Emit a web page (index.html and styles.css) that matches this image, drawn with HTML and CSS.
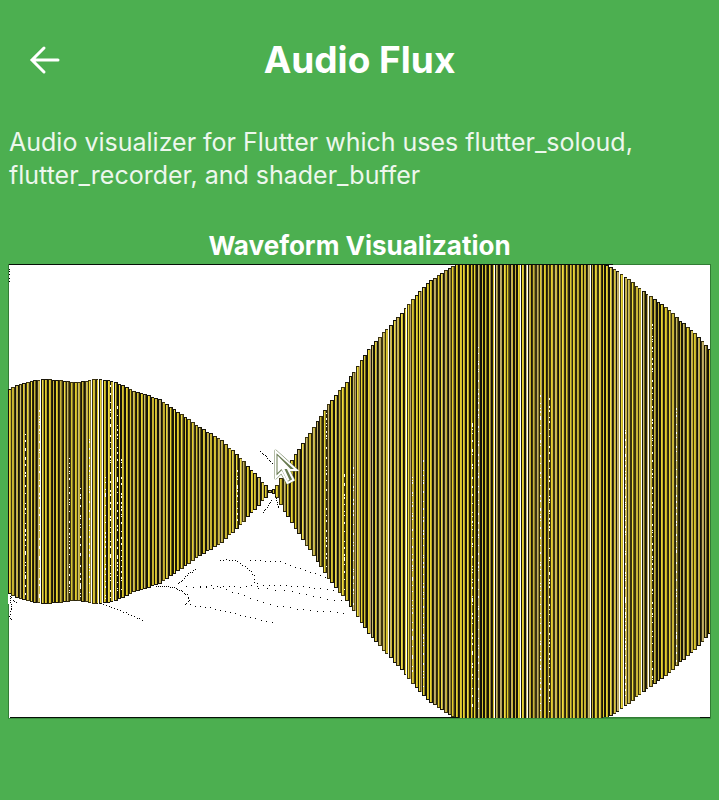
FILE: index.html
```html
<!DOCTYPE html>
<html lang="en">
<head>
<meta charset="utf-8">
<meta name="viewport" content="width=device-width, initial-scale=1">
<title>Audio Flux</title>
<link rel="stylesheet" href="styles.css">
</head>
<body>
<header class="app-bar">
  <button class="back" type="button" aria-label="Back">
    <svg viewBox="0 0 32 32" aria-hidden="true"><path d="M29 16H4M15 4 3 16l12 12"/></svg>
  </button>
  <h1 class="title">Audio Flux</h1>
</header>
<main class="content">
  <p class="description">Audio visualizer for Flutter which uses flutter_soloud, flutter_recorder, and shader_buffer</p>
  <h2 class="section-title">Waveform Visualization</h2>
  <svg class="wave" viewBox="0 0 703 455" role="img" aria-label="Waveform">
    <g id="wave" shape-rendering="crispEdges"></g>
    <g class="pointer">
      <path class="pointer-rim" d="M267.500 187v27l6-6 6 11 6-3-5-10h8z"/>
      <path class="pointer-band" d="M267.500 187v27l6-6 6 11 6-3-5-10h8z"/>
      <path class="pointer-core" d="M269.500 191.500v17.500l4-4 6 12 2-1-5-11h6z"/>
    </g>
  </svg>
</main>
<script>
(function () {
  const WIDTH = 703, CENTER = 227;
  let markup = '';

  function rect(x, y, width, height, fill) {
    markup += `<path fill="${fill}" d="M${x} ${y}h${width}v${height}h${-width}z"/>`;
  }

  let seed = 7;
  function random() {
    seed = (seed * 16807) % 2147483647;
    return seed / 2147483647;
  }

  // Amplitude envelope as [x, half height] pairs.
  const envelope = [
    [0, 101], [12, 107], [22, 110], [37, 112], [52, 111], [67, 109], [77, 110], [89, 112],
    [102, 111], [112, 107], [127, 100], [152, 92], [172, 78], [192, 64], [214, 51],
    [232, 34], [247, 18], [258, 6], [263, 0], [267, 3], [282, 28], [292, 43], [307, 66],
    [322, 88], [342, 113], [362, 143], [377, 160], [392, 176], [412, 200], [422, 210],
    [437, 220], [449, 227], [595, 227], [602, 225], [612, 219], [632, 203], [642, 196],
    [662, 181], [672, 171], [687, 158], [703, 141]
  ];

  function amplitude(x) {
    for (let i = 1; i < envelope.length; i++) {
      const [x1, a1] = envelope[i];
      const [x0, a0] = envelope[i - 1];
      if (x <= x1) return a0 + (a1 - a0) * (x - x0) / (x1 - x0);
    }
    return 141;
  }

  const bright = ['#e8d52f', '#d9c62f', '#e3cd28', '#c9b535', '#c9bb6c', '#c3b066', '#efdd3e'];
  const middle = ['#b9a62b', '#c4b02c', '#8f8130', '#cdb83a', '#b3a35a', '#6b6018'];
  const dark = ['#15130a', '#2b250c', '#3b3310', '#1a1608'];
  const pick = list => list[Math.floor(random() * list.length)];
  const gaps = [31, 81, 90, 93, 102, 377, 398, 486, 509, 518, 581, 608, 615, 631, 640];

  for (let i = 0; i < 192; i++) {
    const x = Math.floor(i * 11 / 3);
    const next = Math.floor((i + 1) * 11 / 3);
    const a = Math.max(1, Math.round(amplitude(x + 2)));
    const top = CENTER - a;
    const h = a * 2 + 1;
    const w = Math.min(next, WIDTH) - x;
    if (w < 1) continue;
    rect(x, top, w, h, pick(dark));
    rect(x + 1, top + 1, 1, h - 2, pick(bright));
    if (w > 3 || random() < 0.7) rect(x + 2, top + 1, 1, h - 2, pick(middle));
    if (w > 3 && i > 82 && i < 118 && random() < 0.35) rect(x + 3, top, 1, h, '#b49b70');
    if (gaps.some(g => g >= x && g < next)) rect(next - 1, top, 1, h, '#fff');
  }

  // Broken white columns inside the wave.
  let dots = '';
  for (const x of [17, 31, 61, 72, 81, 97, 102, 109, 113, 229, 318, 336, 345, 404, 415, 464, 470, 486, 532, 541, 617, 640, 644, 668]) {
    const a = amplitude(x);
    const start = CENTER - a + random() * a;
    for (let y = start; y < CENTER + a - 4; y += 2 + Math.floor(random() * 9)) {
      dots += `M${x} ${Math.round(y)}h1v${1 + Math.floor(random() * 2)}h-1z`;
    }
  }
  markup += `<path fill="#fff" d="${dots}"/>`;

  // Trails of single black pixels: pixel spacing, then polyline points.
  const trails = [
    [3, [92, 338], [112, 346], [134, 355], [136, 358]],
    [2, [148, 321], [166, 322], [179, 330], [181, 335], [177, 340]],
    [2, [187, 304], [177, 312], [168, 320]],
    [5, [177, 339], [212, 345], [242, 353], [269, 358]],
    [7, [178, 322], [212, 323], [242, 333], [262, 340], [302, 346], [342, 348]],
    [6, [192, 321], [232, 322], [272, 320], [312, 324], [332, 326]],
    [3, [212, 295], [227, 296], [239, 303], [246, 311], [246, 318], [252, 320]],
    [5, [242, 295], [272, 297], [292, 304], [322, 314]],
    [8, [250, 323], [284, 327], [312, 333], [340, 337]],
    [2, [252, 187], [258, 192], [265, 200]],
    [2, [263, 236], [254, 249]],
    [2, [267, 232], [271, 245]],
    [2, [2, 332], [9, 339]],
    [2, [2, 332], [3, 345], [1, 351], [4, 357]],
    [3, [1, 4], [1, 20]]
  ];
  dots = '';
  for (const [step, ...points] of trails) {
    for (let i = 1; i < points.length; i++) {
      const [x0, y0] = points[i - 1];
      const [x1, y1] = points[i];
      const count = Math.max(1, Math.round(Math.hypot(x1 - x0, y1 - y0) / step));
      for (let n = 0; n < count; n++) {
        const t = n / count;
        dots += `M${Math.round(x0 + (x1 - x0) * t)} ${Math.round(y0 + (y1 - y0) * t + random())}h1v1h-1z`;
      }
    }
  }
  markup += `<path fill="#000" d="${dots}"/>`;

  // Frame
  rect(0, 0, 605, 1, '#061006');
  rect(605, 0, 98, 1, '#327c35');
  rect(2, 453, 449, 1, '#061006');
  rect(595, 453, 97, 1, '#327c35');
  rect(692, 453, 11, 1, '#061006');
  rect(0, 0, 1, 125, '#327c35');
  rect(0, 340, 1, 115, '#327c35');
  rect(702, 0, 1, 455, '#327c35');
  rect(0, 454, 703, 1, '#3b8f3f');

  document.getElementById('wave').innerHTML = markup;
})();
</script>
</body>
</html>
```
FILE: styles.css
```css
* { box-sizing: border-box; }

body {
  margin: 0;
  min-height: 100vh;
  background: #4caf50;
  color: #fff;
  font-family: Inter, "Liberation Sans", sans-serif;
}

.app-bar {
  display: grid;
  grid-template-columns: 72px 1fr 72px;
  align-items: center;
  height: 120px;
  padding: 0 9px;
}

.back {
  display: flex;
  align-items: center;
  justify-content: center;
  width: 72px;
  height: 72px;
  padding: 0;
  border: 0;
  background: none;
  color: inherit;
}

.back svg {
  width: 32px;
  height: 32px;
  fill: none;
  stroke: currentColor;
  stroke-width: 3;
  stroke-linecap: round;
}

.title {
  margin: 0;
  font-size: 37px;
  line-height: 48px;
  font-weight: 700;
  text-align: center;
}

.content { padding: 6px 8px 0 8px; }

.description {
  margin: 0 0 36px;
  padding: 0 1px;
  font-size: 25px;
  line-height: 33px;
  color: #edf7ed;
}

.section-title {
  margin: 0;
  font-size: 26px;
  line-height: 36px;
  font-weight: 700;
  text-align: center;
}

.wave {
  display: block;
  width: 100%;
  height: auto;
  background: #fff;
}

.pointer-rim {
  fill: #fff;
  stroke: #66794f;
  stroke-width: 3;
  stroke-linejoin: round;
}

.pointer-band {
  fill: #66794f;
  stroke: #fff;
  stroke-width: 2;
}

.pointer-core { fill: #fff; }
```
